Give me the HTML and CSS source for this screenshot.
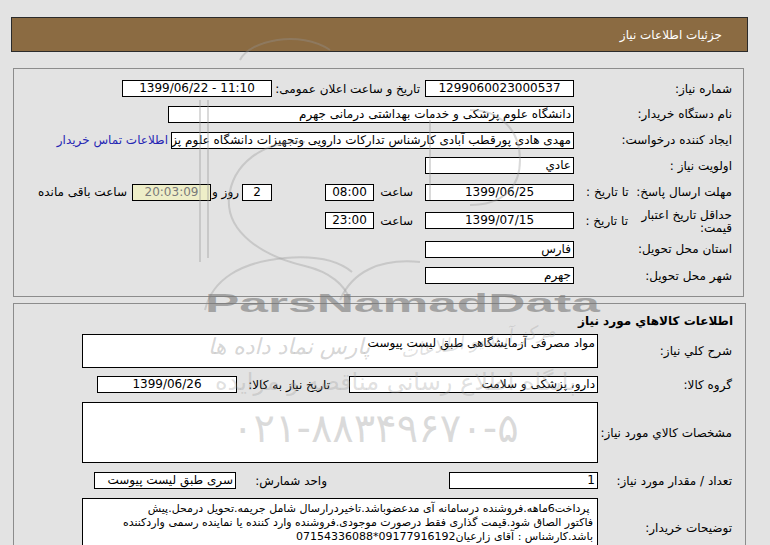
FILE: index.html
```html
<!DOCTYPE html>
<html lang="fa" dir="rtl">
<head>
<meta charset="utf-8">
<title>جزئیات اطلاعات نیاز</title>
<link rel="stylesheet" href="styles.css">
</head>
<body>
<div class="page">
  <div class="header"><span>جزئیات اطلاعات نیاز</span></div>

  <div class="panel p1">
    <div class="row h25">
      <div class="lbl">شماره نیاز:</div>
      <div class="box w149 c">1299060023000537</div>
      <div class="lbl2 w153">تاریخ و ساعت اعلان عمومی:</div>
      <div class="box w150 c" dir="ltr">1399/06/22 - 11:10</div>
    </div>
    <div class="row h26">
      <div class="lbl">نام دستگاه خریدار:</div>
      <div class="box w406">دانشگاه علوم پزشکی و خدمات بهداشتی درمانی جهرم</div>
    </div>
    <div class="row h26">
      <div class="lbl">ایجاد کننده درخواست:</div>
      <div class="box w403 clip">مهدی هادی پورقطب آبادی کارشناس تدارکات دارویی وتجهیزات دانشگاه علوم پزشکی و خدمات بهداشتی درمانی جهرم</div>
      <a class="link" href="#">اطلاعات تماس خریدار</a>
    </div>
    <div class="row h25">
      <div class="lbl">اولویت نیاز :</div>
      <div class="box w149">عادي</div>
    </div>
    <div class="row h28">
      <div class="lbl">مهلت ارسال پاسخ:&nbsp; تا تاریخ :</div>
      <div class="box w149 c">1399/06/25</div>
      <div class="hour">ساعت</div>
      <div class="box w49 c">08:00</div>
      <div class="box w30 c ml">2</div>
      <div class="days">روز و</div>
      <div class="box w79 c count">20:03:09</div>
      <div class="remain">ساعت باقی مانده</div>
    </div>
    <div class="row h29">
      <div class="lbl split">
        <div class="two">حداقل تاریخ اعتبار<br>قیمت:</div>
        <div class="sub">تا تاریخ :</div>
      </div>
      <div class="box w149 c">1399/07/15</div>
      <div class="hour">ساعت</div>
      <div class="box w49 c">23:00</div>
    </div>
    <div class="row h28">
      <div class="lbl">استان محل تحویل:</div>
      <div class="box w149">فارس</div>
    </div>
    <div class="row h25">
      <div class="lbl">شهر محل تحویل:</div>
      <div class="box w149">جهرم</div>
    </div>
  </div>

  <div class="panel p2">
    <div class="title">اطلاعات کالاهاي مورد نياز</div>
    <div class="row2 g5">
      <div class="lbl3">شرح کلي نياز:</div>
      <div class="box w516 h34 top">مواد مصرفی آزمایشگاهی طبق لیست پیوست</div>
    </div>
    <div class="row2 g8">
      <div class="lbl3">گروه کالا:</div>
      <div class="box w249">دارو، پزشکی و سلامت</div>
      <div class="lbl4 w112">تاریخ نیاز به کالا:</div>
      <div class="box w140 c">1399/06/26</div>
    </div>
    <div class="row2 g9">
      <div class="lbl3">مشخصات کالاي مورد نياز:</div>
      <div class="box w516 h61"></div>
    </div>
    <div class="row2 g9">
      <div class="lbl3">تعداد / مقدار مورد نیاز:</div>
      <div class="box w149">1</div>
      <div class="lbl4 w213">واحد شمارش:</div>
      <div class="box w142">سری طبق لیست پیوست</div>
    </div>
    <div class="row2 g9">
      <div class="lbl3">توضیحات خریدار:</div>
      <div class="box w516 h60 desc"><div class="ln">&nbsp;پرداخت6ماهه.فروشنده درسامانه آی مدعضوباشد.تاخیردرارسال شامل جریمه.تحویل درمحل.پیش</div><div class="ln">فاکتور الصاق شود.قیمت گذاری فقط درصورت موجودی.فروشنده وارد کننده یا نماینده رسمی واردکننده</div><div class="ln">باشد.کارشناس : آقای زارعیان09177916192*07154336088</div></div>
    </div>
  </div>
</div>

<div class="wm" aria-hidden="true">
  <svg class="wm-logo" width="770" height="545" viewBox="0 0 770 545">
    <path d="M200 100 V262 M208 100 V258" />
    <path d="M305 142 C262 140 232 165 229 198 C226 232 262 256 305 266 C330 272 345 285 350 300" />
    <path d="M205 310 C212 280 240 262 285 258 C320 255 340 262 352 272" />
    <path d="M340 300 C352 272 380 258 420 262" />
    <path d="M240 60 C250 40 300 30 330 50" />
    <path d="M430 120 V200 M470 110 C500 110 520 130 520 160 C520 190 500 205 470 205" />
  </svg>
  <div class="wm-brand">ParsNamadData</div>
  <div class="wm-fa1">پارس نماد داده ها</div>
  <div class="wm-fa2">مرکز آرشیو اطلاعات</div>
  <div class="wm-fa3">پایگاه اطلاع رسانی مناقصه و مزایده</div>
  <div class="wm-phone">۰۲۱-۸۸۳۴۹۶۷۰-۵</div>
</div>
</body>
</html>
```

FILE: styles.css
```css
html, body {
  margin: 0;
  padding: 0;
}
body {
  background: #e3e3e3;
  font-family: "DejaVu Sans", sans-serif;
  font-size: 12px;
  color: #000;
  direction: rtl;
  position: relative;
  width: 770px;
  height: 545px;
  overflow: hidden;
}
.page {
  padding: 17px 22px 0 11px;
}
.header {
  height: 35px;
  box-sizing: border-box;
  background: #8b6b42;
  border: 1px solid #2b2b2b;
  color: #fff;
  display: flex;
  align-items: center;
  padding-right: 25px;
  font-size: 12px;
}
.panel {
  border: 1px solid #8c8c8c;
  box-sizing: border-box;
}
.p1 {
  margin: 16px 4px 0 2px;
  padding: 7px 0 8px 0;
}
.p2 {
  margin: 6px 2px 0 2px;
  padding: 0 0 20px 0;
}
.row {
  display: flex;
  align-items: center;
}
.h25 { height: 25px; }
.h26 { height: 26px; }
.h28 { height: 28px; }
.h29 { height: 29px; }
.lbl {
  width: 169px;
  box-sizing: border-box;
  padding-right: 11px;
  white-space: nowrap;
  flex: none;
}
.lbl2 {
  box-sizing: border-box;
  padding-right: 5px;
  white-space: nowrap;
  flex: none;
}
.w153 { width: 153px; }
.split {
  display: flex;
  align-items: center;
}
.two {
  width: 92px;
  line-height: 13px;
  padding-top: 2px;
}
.sub {
  margin-right: 12px;
  white-space: nowrap;
}
.box {
  box-sizing: border-box;
  height: 17px;
  border: 1px solid #000;
  background: #fff;
  line-height: 15px;
  padding: 0 2px;
  white-space: nowrap;
  overflow: hidden;
  flex: none;
}
.c { text-align: center; }
.clip { text-overflow: clip; }
.w30 { width: 30px; }
.w49 { width: 49px; }
.w79 { width: 79px; }
.w140 { width: 140px; }
.w142 { width: 142px; }
.w149 { width: 149px; }
.w150 { width: 150px; }
.w249 { width: 249px; }
.w403 { width: 403px; }
.w406 { width: 406px; }
.w516 { width: 516px; }
.ml { margin-right: 53px; }
.hour {
  width: 51px;
  box-sizing: border-box;
  padding-right: 12px;
  white-space: nowrap;
  flex: none;
}
.days {
  width: 31px;
  box-sizing: border-box;
  padding-right: 3px;
  white-space: nowrap;
  flex: none;
}
.count {
  background: #eeeec8;
  color: #7a7a7a;
}
.remain {
  margin-right: 5px;
  white-space: nowrap;
}
.link {
  margin-right: 3px;
  color: #2626b4;
  text-decoration: none;
  white-space: nowrap;
}
.title {
  font-weight: bold;
  font-size: 12px;
  line-height: 15px;
  padding: 10px 12px 0 0;
}
.row2 {
  display: flex;
  align-items: center;
}
.g5 { margin-top: 5px; }
.g8 { margin-top: 8px; }
.g9 { margin-top: 9px; }
.lbl3 {
  width: 147px;
  box-sizing: border-box;
  padding-right: 13px;
  white-space: nowrap;
  flex: none;
}
.lbl4 {
  box-sizing: border-box;
  white-space: nowrap;
  flex: none;
}
.w112 { width: 112px; padding-right: 19px; }
.w213 { width: 213px; padding-right: 122px; }
.h34 { height: 34px; }
.h60 { height: 60px; }
.h61 { height: 61px; }
.top { align-self: center; padding-top: 1px; }
.desc {
  white-space: normal;
  padding: 3px 4px 0 4px;
  line-height: 14px;
}
.desc .ln {
  white-space: nowrap;
  font-size: 11px;
}

/* watermark overlay */
.wm {
  position: absolute;
  left: 0;
  top: 0;
  width: 770px;
  height: 545px;
  pointer-events: none;
}
.wm-logo {
  position: absolute;
  left: 0;
  top: 0;
}
.wm-logo path {
  fill: none;
  stroke: rgba(150, 150, 150, 0.35);
  stroke-width: 2;
}
.wm-brand {
  position: absolute;
  left: 205px;
  top: 289px;
  font-family: "Liberation Sans", sans-serif;
  font-weight: bold;
  font-size: 26px;
  line-height: 28px;
  color: rgba(120, 120, 120, 0.6);
  transform: scaleX(1.98);
  transform-origin: left top;
  direction: ltr;
}
.wm-fa1 {
  position: absolute;
  left: 208px;
  top: 334px;
  font-size: 22px;
  font-style: italic;
  color: rgba(150, 150, 150, 0.4);
  direction: rtl;
  white-space: nowrap;
}
.wm-fa2 {
  position: absolute;
  left: 400px;
  top: 330px;
  font-size: 18px;
  font-style: italic;
  color: rgba(150, 150, 150, 0.3);
  white-space: nowrap;
  transform: rotate(-8deg);
}
.wm-fa3 {
  position: absolute;
  left: 215px;
  top: 368px;
  font-size: 24px;
  color: rgba(150, 150, 150, 0.3);
  white-space: nowrap;
}
.wm-phone {
  position: absolute;
  left: 232px;
  top: 405px;
  font-size: 40px;
  line-height: 46px;
  color: rgba(150, 150, 150, 0.35);
  white-space: nowrap;
  direction: ltr;
}
```
